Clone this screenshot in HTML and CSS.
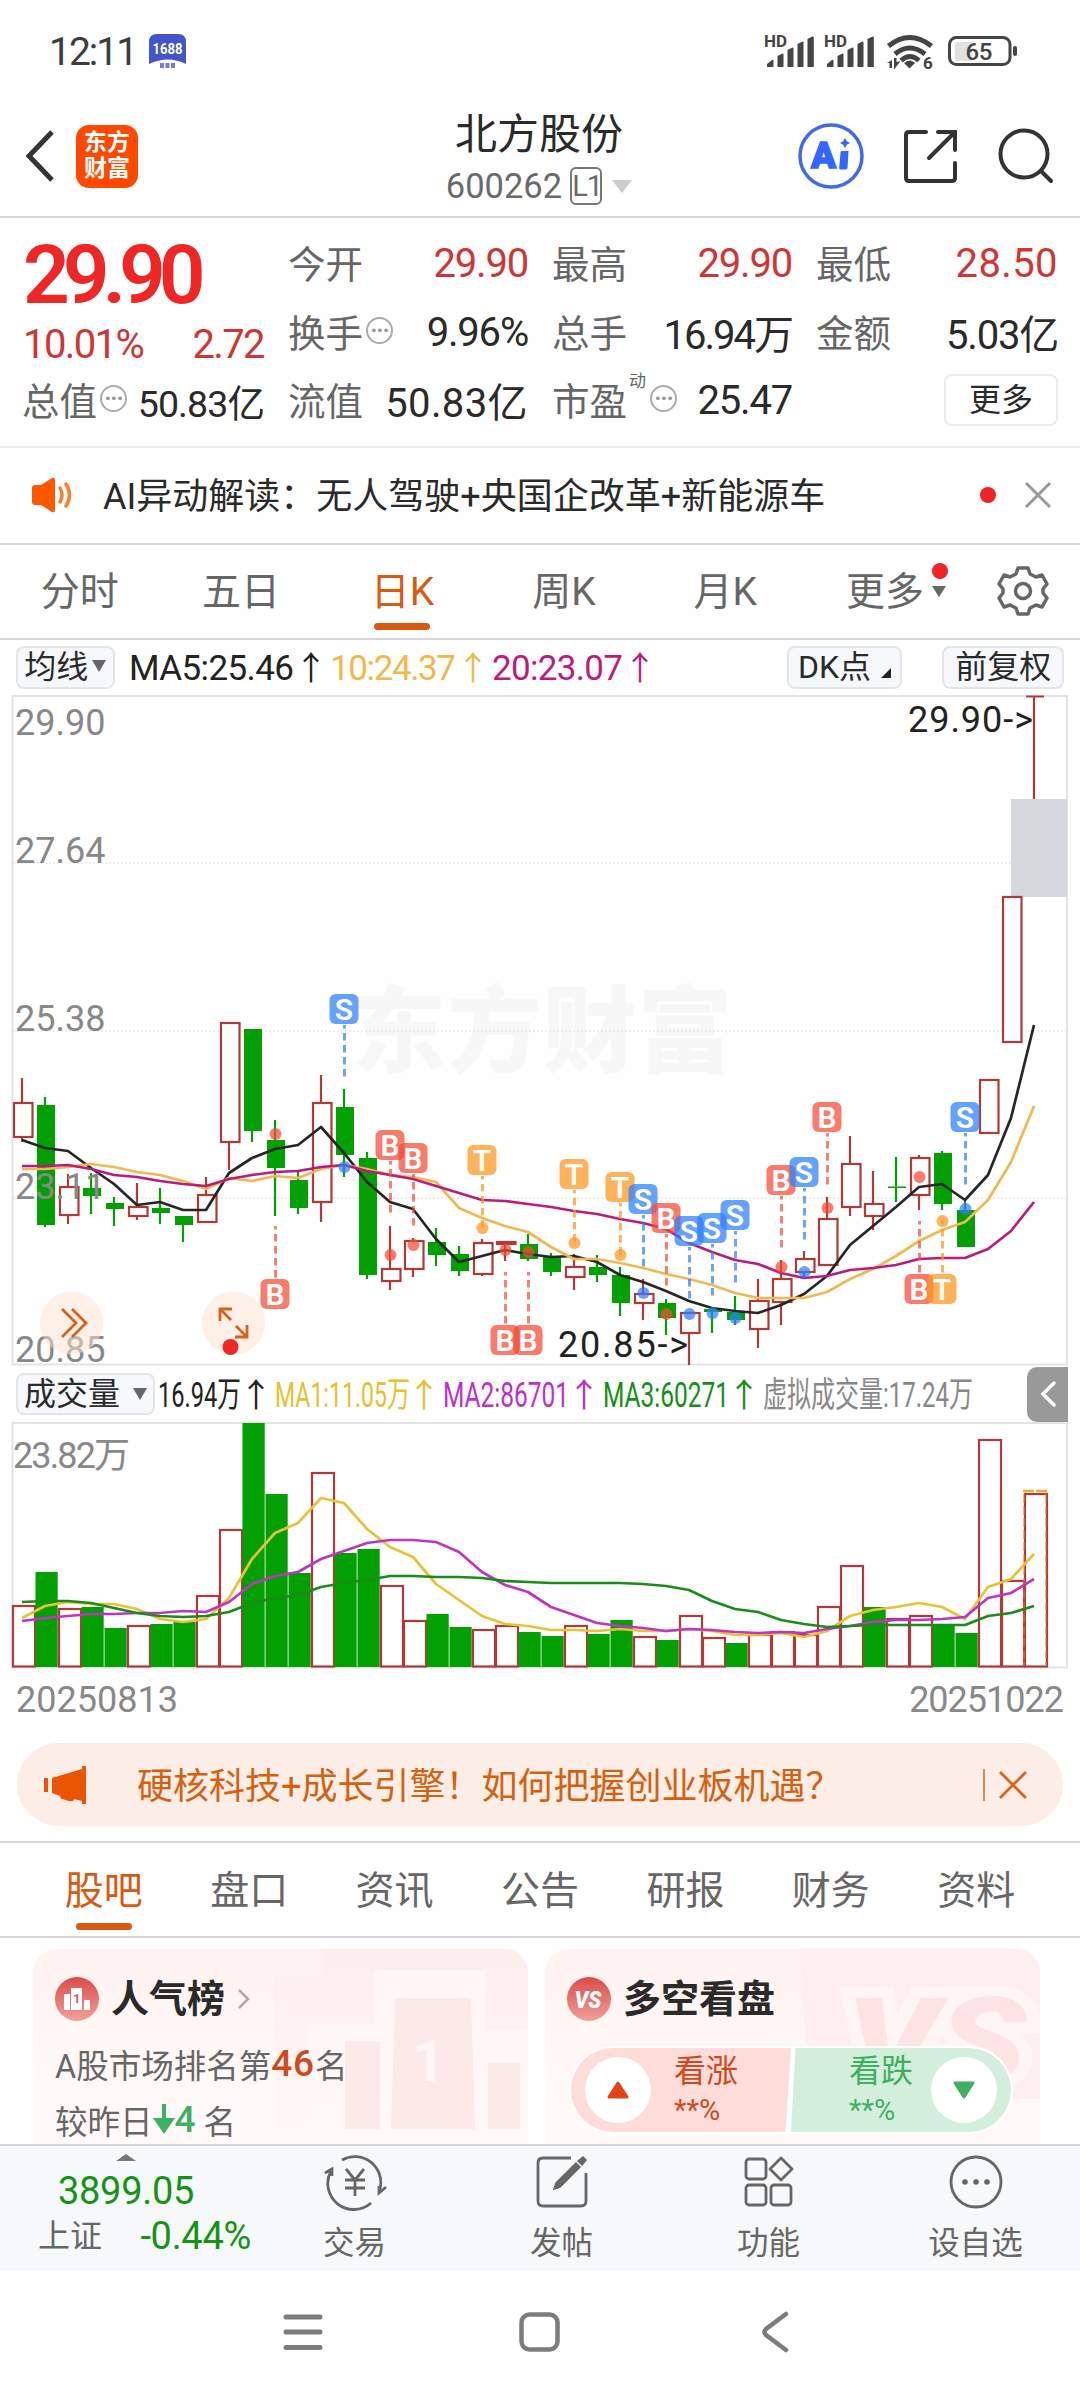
FILE: index.html
```html
<!DOCTYPE html>
<html lang="zh-CN">
<head>
    <meta charset="UTF-8">
    <meta name="viewport" content="width=1080">
    <title>北方股份 600262</title>
    <link rel="stylesheet" href="styles.css">
</head>
<body>
<div class="phone">
    <!-- 状态栏 -->
    <div class="status">
        <span class="clock">12:11</span>
        <svg class="app1688" width="37" height="36" viewBox="0 0 37 36">
            <path d="M8 0h21q8 0 8 8v22q-18-9-37 0V8q0-8 8-8z" fill="#4355c8"/>
            <text x="18.500" y="20" font-size="14.500" font-weight="700" fill="#fff" text-anchor="middle" textLength="30" lengthAdjust="spacingAndGlyphs">1688</text>
            <path d="M11 29h4v5h-4zM16.500 29h4v5h-4zM22 29h4v5h-4z" fill="#6f7dd6"/>
        </svg>
        <svg class="status-icons" width="260" height="40" viewBox="760 32 260 40">
            <g fill="#444">
                <text x="764" y="47" font-size="16" font-weight="700" textLength="23" lengthAdjust="spacingAndGlyphs">HD</text>
                <path id="sig" d="M767 67v-3l5-4q1.500-1 1.500 1v6zM777.500 67V56l5-2.500q1 0 1 1V67zM787.500 67V50l5-2.500q1 0 1 1V67zM797.500 67V44l5-2.500q1 0 1 1V67zM807.500 67V39l5-2.500q1.300 0 1.300 1V67z"/>
                <text x="824" y="47" font-size="16" font-weight="700" textLength="23" lengthAdjust="spacingAndGlyphs">HD</text>
                <use href="#sig" x="60"/>
                <path d="M904 63q6-5 11 0l-5.500 5.500z"/>
                <text x="923" y="69" font-size="17" font-weight="700">6</text>
                <path d="M887 63l5-3v8h-2.500v-5zM894 69v-11h2.500v4l4-1-6 8z"/>
                <rect x="1013" y="46" width="4" height="10" rx="2"/>
            </g>
            <g fill="none" stroke="#444" stroke-width="5">
                <path d="M888.500 46q21-17 43 0M895 54q14.500-12 30 0M901 60.500q9-8 18 0"/>
                <rect x="949.500" y="37.500" width="60.500" height="27" rx="7" stroke-width="3"/>
            </g>
            <path d="M957 42h15v19h-15q-2 0-2-3v-13q0-3 2-3z" fill="#e0e0e0"/>
            <text x="979" y="60" font-size="24" font-weight="500" fill="#444" text-anchor="middle" textLength="27">65</text>
        </svg>
    </div>

    <!-- 标题栏 -->
    <div class="header">
        <svg class="back" width="32" height="54" viewBox="0 0 32 54"><path d="M28 3 5 27l23 24" fill="none" stroke="#333" stroke-width="5"/></svg>
        <div class="logo">东方<br>财富</div>
        <div class="stock">
            <div class="stock-name">北方股份</div>
            <div class="stock-code">600262<span class="level">L1</span><i class="tri"></i></div>
        </div>
        <svg class="ai" width="68" height="68" viewBox="0 0 68 68">
            <circle cx="34" cy="34" r="31" fill="none" stroke="#4169e8" stroke-width="3.500"/>
            <text x="14" y="45.500" font-size="36" font-weight="900" fill="#3366ff" stroke="#3366ff" stroke-width="1.500" textLength="25" lengthAdjust="spacingAndGlyphs">A</text>
            <path d="M44.500 29h7l-1 17q0 1.500-2 1.500h-5q-1.500 0-1.300-1.500l1.300-15.500q0-1.500 1-1.500zM48 16l1.800 3.200L53 21l-3.200 1.800L48 26l-1.800-3.200L43 21l3.200-1.800z" fill="#3366ff"/>
        </svg>
        <svg class="share" width="56" height="56" viewBox="0 0 56 56"><path d="M23 4H6q-3 0-3 3v43q0 3 3 3h43q3 0 3-3V35M35 4h17v18M51 5 26 30" fill="none" stroke="#333" stroke-width="4" stroke-linecap="round"/></svg>
        <svg class="search" width="58" height="58" viewBox="0 0 58 58"><circle cx="27" cy="27" r="23.500" fill="none" stroke="#333" stroke-width="4"/><path d="m44 44 10 10" stroke="#333" stroke-width="4" stroke-linecap="round"/></svg>
    </div>

    <!-- 行情 -->
    <div class="quote">
        <div class="price">
            <div class="now">29.90</div>
            <div class="change"><span>10.01%</span><span>2.72</span></div>
        </div>
        <div class="cell"><label>今开</label><b class="red">29.90</b></div>
        <div class="cell"><label>最高</label><b class="red">29.90</b></div>
        <div class="cell"><label>最低</label><b class="red wide">28.50</b></div>
        <div class="cell"><label>换手</label><i class="dots">···</i><b>9.96%</b></div>
        <div class="cell"><label>总手</label><b class="tight">16.94万</b></div>
        <div class="cell"><label>金额</label><b>5.03亿</b></div>
        <div class="cell small"><label>总值</label><i class="dots">···</i><b>50.83亿</b></div>
        <div class="cell"><label>流值</label><b class="wide">50.83亿</b></div>
        <div class="cell"><label>市盈<sup>动</sup></label><i class="dots pe">···</i><b>25.47</b></div>
        <div class="cell"><button class="more">更多</button></div>
    </div>

    <!-- AI异动 -->
    <div class="notice">
        <svg width="42" height="36" viewBox="0 0 42 36"><path d="M0 11q0-3 3-3h6L20 1q3-1 3 2v30q0 3-3 2L9 28H3q-3 0-3-3z" fill="#ff5600"/><path d="M28 11q4 7 0 14M34 7q7 11 0 22" fill="none" stroke="#ff7a33" stroke-width="3.500" stroke-linecap="round"/></svg>
        <span class="notice-text">AI异动解读：无人驾驶+央国企改革+新能源车</span>
        <i class="red-dot"></i>
        <svg width="28" height="28" viewBox="0 0 28 28"><path d="m2 2 24 24M26 2 2 26" stroke="#999" stroke-width="3"/></svg>
    </div>

    <!-- 周期 -->
    <div class="period">
        <span>分时</span><span>五日</span><span class="on">日K</span><span>周K</span><span>月K</span>
        <span class="p-more">更多<i class="tri"></i><i class="red-dot"></i></span>
        <svg class="gear" width="52" height="52" viewBox="-26 -26 52 52"><path d="M-5-23H5L7-17 13-14 19-16 24-7 20-2V2L24 7 19 16 13 14 7 17 5 23H-5L-7 17-13 14-19 16-24 7-20 2V-2L-24-7-19-16-13-14-7-17Z" fill="none" stroke="#666" stroke-width="3.500" stroke-linejoin="round"/><circle r="7.500" fill="none" stroke="#666" stroke-width="3.500"/></svg>
    </div>

    <!-- 均线 -->
    <div class="ma">
        <button class="chip c1">均线<i class="tri"></i></button>
        <svg class="legend" width="530" height="50" viewBox="125 642 530 50">
            <g fill="#222"><text x="129" y="680" textLength="165">MA5:25.46</text><text class="up" x="311" y="680">↑</text></g>
            <g fill="#f0b84a"><text x="330" y="680" textLength="126">10:24.37</text><text class="up" x="473" y="680">↑</text></g>
            <g fill="#bf1a7d"><text x="492" y="680" textLength="131">20:23.07</text><text class="up" x="640" y="680">↑</text></g>
        </svg>
        <button class="chip c2">DK点<i class="corner"></i></button>
        <button class="chip c3">前复权</button>
    </div>

    <svg class="kline" id="kline" width="1080" height="671" viewBox="0 695 1080 671"></svg>

    <!-- 成交量 -->
    <div class="volume-head">
        <button class="chip c4">成交量<i class="tri"></i></button>
        <svg class="legend" width="830" height="50" viewBox="157 1370 830 50">
            <g fill="#222"><text x="158" y="1408" textLength="83" lengthAdjust="spacingAndGlyphs">16.94万</text><text class="up" x="256" y="1408">↑</text></g>
            <g fill="#e6c02f"><text x="275" y="1408" textLength="135" lengthAdjust="spacingAndGlyphs">MA1:11.05万</text><text class="up" x="424" y="1408">↑</text></g>
            <g fill="#c02fc9"><text x="443" y="1408" textLength="126" lengthAdjust="spacingAndGlyphs">MA2:86701</text><text class="up" x="584" y="1408">↑</text></g>
            <g fill="#178f17"><text x="603" y="1408" textLength="126" lengthAdjust="spacingAndGlyphs">MA3:60271</text><text class="up" x="744" y="1408">↑</text></g>
            <text fill="#888" x="763" y="1408" textLength="210" lengthAdjust="spacingAndGlyphs">虚拟成交量:17.24万</text>
        </svg>
        <div class="drawer"><svg width="18" height="28" viewBox="0 0 18 28"><path d="M15 3 4 14l11 11" fill="none" stroke="#fff" stroke-width="3.500" stroke-linecap="round"/></svg></div>
    </div>
    <svg class="volume" id="volume" width="1080" height="247" viewBox="0 1422 1080 247"></svg>
    <div class="dates"><span>20250813</span><span>20251022</span></div>

    <!-- 广告 -->
    <div class="banner">
        <svg width="42" height="38" viewBox="0 0 42 38"><path d="M0 12h4v14H0zM8 12 38 3V0h4v38h-4v-3l-8-2v1q-2 2-5 1l-7-2q-2-1-2-3L8 27z" fill="#ea5504"/></svg>
        <span class="banner-text">硬核科技+成长引擎！如何把握创业板机遇？</span>
        <i class="bar"></i>
        <svg width="30" height="30" viewBox="0 0 30 30"><path d="m2 2 26 26M28 2 2 28" stroke="#e0611c" stroke-width="2.800"/></svg>
    </div>

    <div class="tabs">
        <span class="on">股吧</span><span>盘口</span><span>资讯</span><span>公告</span><span>研报</span><span>财务</span><span>资料</span>
    </div>

    <div class="cards">
        <div class="card">
            <svg class="card-bg" width="495" height="196" viewBox="33 1949 495 196">
                <defs><linearGradient id="fade" x1="0" y1="0" x2="0" y2="1"><stop offset="0" stop-color="#fdeceb"/><stop offset="1" stop-color="#fff8f7"/></linearGradient></defs>
                <path d="M275 2145v-168h46v-28h207v196z" fill="url(#fade)" opacity=".7"/>
                <path d="M308 2129v-105h66v-54h112v60h42v99z" fill="#fff7f6" opacity=".8"/>
                <path d="M345 2041h35v88h-35zM395 1998h76l4 131h-84zM488 2063h32v66h-32z" fill="#fceae8"/>
                <text x="412" y="2081" font-size="58" font-weight="700" fill="#fff7f6">1</text>
            </svg>
            <h3>
                <svg width="44" height="44" viewBox="-22 -22 44 44"><circle r="22" fill="url(#redg)"/><path d="M-13-5h6v16h-6zM-6-11H5v22H-6zM7 1h6v10H7z" fill="#fff"/><text x="-4" y="4" font-size="13" font-weight="700" fill="#d9605c">1</text>
                    <defs><linearGradient id="redg" x1="0" y1="0" x2="0" y2="1"><stop offset="0" stop-color="#d94c48"/><stop offset="1" stop-color="#f0a09b"/></linearGradient></defs></svg>
                人气榜
                <svg class="go" width="14" height="22" viewBox="0 0 14 22"><path d="m2 2 9 9-9 9" fill="none" stroke="#aaa" stroke-width="2.500"/></svg>
            </h3>
            <p>A股市场排名第<b class="hot">46</b>名</p>
            <p>较昨日<svg class="down" width="22" height="30" viewBox="0 0 22 30"><path d="M9 0h4v14h9L11 30 0 14h9z" fill="#3fb062"/></svg><b class="cold">4</b> 名</p>
        </div>
        <div class="card">
            <svg class="card-bg" width="495" height="196" viewBox="545 1949 495 196">
                <path d="M799 1949h241v150H810z" fill="#feefee"/>
                <text x="846" y="2082" font-size="118" font-weight="900" font-style="italic" fill="#fde3e1" stroke="#fff5f4" stroke-width="22" paint-order="stroke" textLength="180" lengthAdjust="spacingAndGlyphs">VS</text>
            </svg>
            <h3>
                <svg width="44" height="44" viewBox="-22 -22 44 44"><circle r="22" fill="url(#redg)"/><text x="-1" y="9" font-size="24" font-weight="900" font-style="italic" fill="#fff" text-anchor="middle" textLength="27" lengthAdjust="spacingAndGlyphs">VS</text></svg>
                多空看盘
            </h3>
            <div class="vote">
                <div class="rise"><i><svg width="22" height="18" viewBox="0 0 22 18"><path d="M11 2 20 16H2z" fill="#e04414" stroke="#e04414" stroke-width="3" stroke-linejoin="round"/></svg></i><span>看涨<br><small>**%</small></span></div>
                <div class="fall"><span>看跌<br><small>**%</small></span><i><svg width="22" height="18" viewBox="0 0 22 18"><path d="M11 16 20 2H2z" fill="#3fb062" stroke="#3fb062" stroke-width="3" stroke-linejoin="round"/></svg></i></div>
            </div>
        </div>
    </div>

    <!-- 底部 -->
    <div class="footer">
        <div class="index">
            <i class="fold"></i>
            <div class="point">3899.05</div>
            <div class="pct"><span>上证</span><b>-0.44%</b></div>
        </div>
        <div class="item">
            <svg width="64" height="58" viewBox="-32 -29 64 58"><g fill="none" stroke="#666" stroke-width="2.800"><path d="M-13-22A26 26 0 0 1 25 7M16 21A26 26 0 0 1-24-11M-30-9l7-4v7M31 5l-7 6V4M-9-13l9 11 9-11M0-2v16M-10-2h20M-10 6h20"/></g></svg>
            交易
        </div>
        <div class="item">
            <svg width="64" height="58" viewBox="-32 -29 64 58"><path d="M9-24h-28q-5 0-5 5v38q0 5 5 5h38q5 0 5-5V-9" fill="none" stroke="#666" stroke-width="2.800"/><path d="M-8 7-6 1 14-19l4 4L-2 5zM16-21l5-4 3 3-4 5z" fill="#666" stroke="#666" stroke-width="1.500"/></svg>
            发帖
        </div>
        <div class="item">
            <svg width="64" height="58" viewBox="-32 -29 64 58"><g fill="none" stroke="#666" stroke-width="2.800" stroke-linejoin="round"><rect x="-23" y="-23" width="20" height="20" rx="3"/><rect x="-23" y="3" width="20" height="20" rx="3"/><rect x="2" y="3" width="20" height="20" rx="3"/><path d="m12-24 11 11-11 11L1-13z"/></g></svg>
            功能
        </div>
        <div class="item">
            <svg width="64" height="58" viewBox="-32 -29 64 58"><circle r="25" fill="none" stroke="#666" stroke-width="2.800"/><g fill="#666"><circle cx="-11" r="2.800"/><circle r="2.800"/><circle cx="11" r="2.800"/></g></svg>
            设自选
        </div>
    </div>
    <div class="nav">
        <svg width="1080" height="130" viewBox="0 2270 1080 130">
            <path d="M286 2317h34M286 2332h34M286 2347.500h34" stroke="#7c7c7c" stroke-width="5" stroke-linecap="round"/>
            <rect x="521.500" y="2314.500" width="36" height="35" rx="8" fill="none" stroke="#7c7c7c" stroke-width="4.500"/>
            <path d="m786 2314-20 15q-3 3 0 6l20 15" fill="none" stroke="#7c7c7c" stroke-width="4.500" stroke-linecap="round"/>
        </svg>
    </div>
</div>

<script>
const RED = '#b03a38';
const GREEN = '#02a002';
const X = i => 22 + i * 23;

// [最高, 实体上沿, 实体下沿, 最低, 涨(1)/跌(0)]
const candles = [
    [1078,1103,1137,1142,1],[1097,1105,1225,1227,0],[1174,1187,1215,1224,1],[1173,1188,1196,1214,0],[1197,1203,1209,1226,0],
    [1183,1207,1216,1220,1],[1188,1208,1213,1224,0],[1216,1216,1225,1242,0],[1177,1195,1222,1222,1],[1023,1023,1142,1170,1],
    [1029,1029,1131,1142,0],[1120,1140,1168,1216,0],[1172,1180,1208,1214,0],[1075,1103,1202,1222,1],[1089,1107,1155,1177,0],
    [1152,1158,1275,1279,0],[1226,1269,1281,1290,1],[1238,1241,1269,1277,1],[1228,1242,1255,1266,0],[1246,1254,1271,1276,0],
    [1239,1243,1274,1276,1],[1241,1242,1244,1261,1],[1234,1244,1259,1261,0],[1253,1257,1272,1276,0],[1254,1267,1277,1290,1],
    [1255,1267,1275,1282,0],[1267,1275,1303,1316,0],[1279,1294,1303,1320,1],[1299,1303,1318,1335,0],[1313,1313,1333,1365,1],
    [1308,1309,1312,1333,0],[1296,1312,1320,1325,0],[1279,1301,1329,1348,1],[1260,1279,1302,1325,1],[1251,1259,1272,1277,1],
    [1197,1219,1265,1265,1],[1136,1164,1207,1216,1],[1171,1204,1216,1230,1],[1157,1186.5,1188,1202,0],[1155,1158,1195,1210,1],
    [1151,1153,1204,1210,0],[1200,1210,1247,1247,0],[1080,1080,1133,1133,1],[897,897,1042,1042,1]
];
const ma5 = [1140,1148,1151,1168,1184,1205,1202,1210,1210,1173,1158,1149,1145,1127,1153,1182,1202,1209,1239,1262,1256,1250,1254,1257,1256,1262,1275,1282,1291,1301,1308,1311,1313,1305,1294,1276,1245,1226,1207,1187,1184,1200,1175,1118,1025];
const ma10 = [1169,1169,1167,1164,1167,1172,1175,1181,1189,1178,1181,1176,1178,1169,1165,1169,1175,1177,1182,1208,1218,1226,1232,1247,1259,1259,1263,1268,1274,1279,1285,1293,1298,1298,1298,1292,1279,1269,1256,1241,1230,1222,1200,1162,1106];
const ma20 = [1166,1166,1165,1169,1175,1177,1181,1184,1186,1179,1175,1172,1171,1167,1165,1171,1175,1179,1186,1193,1200,1201,1204,1207,1211,1214,1219,1223,1229,1243,1252,1260,1264,1273,1278,1276,1270,1268,1265,1259,1258,1258,1249,1231,1202];

// [类型, 第几根, 标签y, 圆点y, 标签在下方]
const marks = [
    ['S',14,1009,1167],['B',11,1294,1134,1],['B',16,1145,1255],['B',17,1158,1245],['T',20,1160,1228],['B',21,1340,1250,1],['B',22,1340,1252,1],
    ['T',24,1174,1243],['T',26,1187,1255],['S',27,1199,1293],['B',28,1218,1314],['S',29,1231,1314],['S',30,1228,1313],['S',31,1215,1318],
    ['B',33,1180,1267],['S',34,1172,1272],['B',35,1117,1208],['B',39,1289,1177,1],['T',40,1289,1221,1],['S',41,1117,1209]
];
const markColor = { B: '#f74a35', S: '#2b80ff', T: '#ff951c' };

function line(data, color) {
    return `<polyline points="${data.map((y, i) => X(i) + ',' + y).join(' ')}" fill="none" stroke="${color}" stroke-width="2.7" stroke-linejoin="round"/>`;
}

function drawKline() {
    let s = `<text class="watermark" x="352" y="1065" textLength="380">东方财富</text>`;
    [863, 1031, 1198].forEach(y => s += `<path d="M13 ${y}H1067" stroke="#ddd" stroke-dasharray="2 2"/>`);
    s += `<path d="M12.500 696H1067V1364.500H12.500Z" fill="none" stroke="#e3e3e3" stroke-width="2"/>`;
    s += `<rect x="1011" y="799" width="56" height="98" fill="#d4d7dc"/>`;
    candles.forEach(([hi, top, bot, lo, up], i) => {
        const x = X(i), c = up ? RED : GREEN;
        s += `<path d="M${x} ${hi}V${top}M${x} ${bot}V${lo}" stroke="${c}" stroke-width="2.2"/>`;
        s += up
            ? `<rect x="${x - 8}" y="${top}" width="18.500" height="${bot - top}" fill="#fff" stroke="${c}" stroke-width="2.2"/>`
            : `<rect x="${x - 8}" y="${top}" width="18" height="${bot - top}" fill="${c}"/>`;
    });
    s += `<path d="M1034 696V799M1026 696.500H1044" stroke="${RED}" stroke-width="2.200"/>`;
    s += line(ma5, '#262626') + line(ma10, '#efb950') + line(ma20, '#bb1c7c');
    marks.forEach(([t, i, y, dot, below]) => {
        const x = X(i), c = markColor[t];
        const from = below ? y - 68 : y + 16;
        s += `<path d="M${x + .5} ${from}v53" stroke="${c}" stroke-width="3" stroke-dasharray="7.500 4.500" stroke-dashoffset="4" opacity=".7"/>`;
        s += `<circle cx="${x + .5}" cy="${dot}" r="6" fill="${c}" opacity=".72"/>`;
        s += `<rect x="${x - 14.5}" y="${y - 15}" width="29" height="30" rx="6" fill="${c}" opacity=".73"/>`;
        s += `<text class="mark" x="${x}" y="${y + 11}">${t}</text>`;
    });
    [['29.90', 735], ['27.64', 863], ['25.38', 1031], ['23.11', 1199], ['20.85', 1362]].forEach(([t, y]) => {
        s += `<text class="axis" x="15" y="${y}">${t}</text>`;
    });
    s += `<text class="tip" x="908" y="732" textLength="125">29.90-&gt;</text><text class="tip" x="558" y="1357" textLength="130">20.85-&gt;</text>`;
    // 悬浮按钮
    s += `<circle cx="71.500" cy="1323" r="31.500" fill="#fde0d0" opacity=".5"/><circle cx="233.500" cy="1323" r="31.500" fill="#fde0d0" opacity=".5"/>`;
    s += `<path d="m62 1309 14 14-14 14M72 1309l14 14-14 14M231 1320l-11-11M232 1309h-12v12M236 1326l11 11M247 1325v12h-12" fill="none" stroke="#d9601c" stroke-width="2.800"/>`;
    s += `<circle cx="230.500" cy="1347" r="8" fill="#ee2722"/>`;
    document.getElementById('kline').innerHTML = s;
}

const vols = [1606,1572,1609,1607,1628,1626,1624,1622,1596,1530,1423,1494,1573,1473,1553,1549,1586,1621,1614,1627,1630,1626,1632,1636,1626,1634,1620,1637,1640,1616,1638,1643,1635,1632,1635,1607,1566,1607,1619,1616,1624,1633,1440,1581,1494];
const volRed = [0,2,5,8,9,13,16,17,20,21,24,27,29,30,32,33,34,35,36,38,39,42,43,44];
const vma1 = [1618,1606,1602,1604,1604,1609,1619,1622,1619,1598,1559,1533,1523,1498,1503,1529,1547,1557,1584,1600,1616,1624,1626,1630,1630,1631,1629,1631,1631,1629,1631,1635,1635,1633,1637,1631,1616,1610,1607,1603,1607,1619,1587,1579,1554];
const vma2 = [1621,1618,1616,1614,1614,1613,1613,1611,1612,1602,1584,1576,1572,1559,1551,1543,1540,1540,1542,1552,1572,1585,1592,1607,1615,1623,1626,1628,1631,1629,1630,1632,1633,1632,1633,1629,1626,1622,1620,1620,1619,1617,1598,1593,1579];
const vma3 = [1602,1601,1601,1603,1608,1613,1616,1617,1616,1612,1603,1598,1595,1587,1583,1580,1576,1576,1577,1577,1578,1581,1582,1583,1583,1583,1583,1584,1586,1590,1601,1609,1612,1620,1624,1627,1626,1625,1625,1625,1625,1625,1616,1613,1606];

function drawVolume() {
    let s = `<path d="M12.500 1423H1067V1667.500H12.500Z" fill="none" stroke="#e3e3e3" stroke-width="2"/>`;
    vols.forEach((y, i) => {
        const x = X(i) - 9.5;
        s += volRed.includes(i)
            ? `<rect x="${x + .5}" y="${y}" width="22" height="${1666.5 - y}" fill="#fff" stroke="${RED}" stroke-width="2.200"/>`
            : `<rect x="${x}" y="${y}" width="22.200" height="${1667 - y}" fill="${GREEN}"/>`;
    });
    s += `<path d="M1023 1491h24" stroke="#e6b02f" stroke-width="2.500" stroke-dasharray="11 2"/>`;
    s += `<path d="M1024 1494v172M1046 1494v172" stroke="#e6802f" stroke-width="1" stroke-dasharray="9 3"/>`;
    s += line(vma1, '#e8c235') + line(vma2, '#bd35c2') + line(vma3, '#1a8c1a');
    s += `<text class="axis" x="13" y="1468" textLength="117">23.82万</text>`;
    document.getElementById('volume').innerHTML = s;
}

drawKline();
drawVolume();
</script>
</body>
</html>
```
FILE: styles.css
```css
* {
    box-sizing: border-box;
}
body {
    margin: 0;
    background: #fefefe;
    font-family: Roboto, "Noto Sans CJK SC", sans-serif;
    color: #2a2a2a;
}
svg {
    display: block;
    flex: none;
}
i {
    font-style: normal;
}
button {
    font-family: inherit;
    color: inherit;
    padding: 0;
}
.phone {
    width: 1080px;
    height: 2400px;
    display: flex;
    flex-direction: column;
    overflow: hidden;
}
.phone > * {
    flex: none;
}
.tri {
    display: inline-block;
    border: 7px solid transparent;
    border-top: 12px solid #666;
    border-bottom: 0;
}
.red-dot {
    width: 16px;
    height: 16px;
    border-radius: 50%;
    background: #f02424;
}

/* 状态栏 */
.status {
    height: 100px;
    display: flex;
    align-items: center;
    padding: 3px 60px 0 49px;
}
.clock {
    font-size: 39px;
    letter-spacing: -2px;
    color: #3c3c3c;
    width: 100px;
}
.status-icons {
    margin-left: auto;
}

/* 标题栏 */
.header {
    height: 118px;
    border-bottom: 2px solid #d6d6d6;
    display: flex;
    align-items: center;
    padding: 0 25px 4px 24px;
}
.logo {
    width: 63px;
    height: 63px;
    margin-left: 20px;
    border-radius: 13px;
    background: #ff4800;
    color: #fff;
    font-size: 23px;
    line-height: 26px;
    font-weight: 700;
    text-align: center;
    padding-top: 5px;
}
.stock {
    width: 240px;
    margin: 4px 0 0 283px;
    text-align: center;
}
.stock-name {
    font-size: 42px;
    line-height: 54px;
}
.stock-code {
    display: flex;
    align-items: center;
    justify-content: center;
    height: 44px;
    margin-top: 2px;
    font-size: 34.500px;
    color: #6a6a6a;
}
.level {
    width: 32px;
    height: 38px;
    margin: 0 10px 0 8px;
    border: 2px solid #777;
    border-radius: 6px;
    font-size: 29px;
    line-height: 34px;
    letter-spacing: -1px;
}
.stock-code .tri {
    border-width: 13px 10px 0;
    border-top-color: #ccc;
}
.ai {
    margin-left: 140px;
}
.share {
    margin-left: 38px;
}
.search {
    margin-left: 38px;
}

/* 行情 */
.quote {
    height: 230px;
    padding: 10px 22px 0 23px;
    border-bottom: 2px solid #ececec;
    display: grid;
    grid-template-columns: 241px 239px 239px 241px;
    grid-template-rows: 70px 68px 68px;
    column-gap: 25px;
}
.price {
    grid-row: span 2;
}
.now {
    font-size: 82px;
    font-weight: 600;
    line-height: 94px;
    letter-spacing: -7px;
    color: #ef2626;
}
.change {
    display: flex;
    justify-content: space-between;
    font-size: 40px;
    line-height: 46px;
    letter-spacing: -1.6px;
    color: #d03535;
}
.cell {
    display: flex;
    align-items: center;
    font-size: 40px;
}
.cell label {
    margin: 0 1px 4px -1px;
    font-size: 37.500px;
    color: #666;
    position: relative;
}
.cell b {
    margin-left: auto;
    font-weight: 400;
    letter-spacing: -1.2px;
    white-space: nowrap;
}
.cell .wide {
    letter-spacing: .4px;
}
.cell .tight {
    letter-spacing: -2px;
}
.cell.small b {
    font-size: 37.500px;
    letter-spacing: -.9px;
}
.cell .red {
    color: #d03535;
}
.cell sup {
    position: absolute;
    left: 77px;
    top: 0;
    font-size: 17px;
    line-height: 20px;
}
.dots {
    width: 27px;
    height: 27px;
    margin: 0 0 4px 2px;
    border: 2px solid #aaa;
    border-radius: 50%;
    color: #999;
    font-size: 24px;
    font-weight: 700;
    line-height: 22px;
    text-align: center;
    letter-spacing: -1px;
}
.dots.pe {
    margin-left: 22px;
}
.more {
    width: 114px;
    height: 52px;
    margin-left: auto;
    border: 2px solid #e9ebec;
    border-radius: 8px;
    background: #fff;
    font-size: 32px;
    line-height: 44px;
}

/* AI异动 */
.notice {
    height: 97px;
    border-bottom: 2px solid #d6d6d6;
    display: flex;
    align-items: center;
    padding: 0 28px 2px 32px;
}
.notice-text {
    margin-left: 29px;
    margin-right: auto;
    padding-bottom: 3px;
    font-size: 36px;
}
.notice .red-dot {
    margin-right: 28px;
}

/* 周期 */
.period {
    height: 95px;
    border-bottom: 2px solid #d6d6d6;
    display: flex;
    align-items: center;
    padding-bottom: 2px;
    font-size: 39px;
    color: #666;
}
.period span {
    width: 161.400px;
    height: 93px;
    padding-right: 2px;
    line-height: 96px;
    text-align: center;
    position: relative;
}
.period .on,
.tabs .on {
    color: #d85a10;
}
.period .on::after,
.tabs .on::after {
    content: "";
    position: absolute;
    left: 50%;
    bottom: 7px;
    width: 56px;
    height: 7px;
    margin-left: -29px;
    border-radius: 4px;
    background: #d85a10;
}
.period .p-more {
    width: 178px;
    padding-left: 2px;
}
.p-more .tri {
    margin-left: 8px;
    vertical-align: 8px;
    border-width: 11px 7px 0;
}
.p-more .red-dot {
    position: absolute;
    left: 125px;
    top: 19px;
}
.gear {
    margin-left: 12px;
}

/* 图表标题 */
.ma,
.volume-head {
    display: flex;
    align-items: center;
    padding: 0 16px;
}
.ma {
    height: 55px;
    padding-bottom: 1px;
}
.chip {
    height: 43px;
    border: 2px solid #e3e6e9;
    border-radius: 8px;
    background: #f6f8fb;
    font-size: 32px;
    line-height: 38px;
    white-space: nowrap;
}
.c1 {
    width: 99px;
}
.c1 .tri {
    margin-left: 4px;
    vertical-align: 6px;
}
.c2 {
    width: 116px;
    margin-left: 132px;
}
.c3 {
    width: 122px;
    margin-left: 40px;
}
.c4 {
    width: 139px;
    height: 42px;
}
.c4 .tri {
    margin-left: 13px;
    vertical-align: 5px;
}
.corner {
    display: inline-block;
    margin-left: 10px;
    border-left: 10px solid transparent;
    border-bottom: 10px solid #222;
}
.legend {
    font-size: 35px;
    margin-left: 10px;
    overflow: visible;
}
.legend .up {
    font-family: "Noto Sans CJK SC", sans-serif;
    font-size: 33px;
    text-anchor: middle;
}
.volume-head {
    height: 56px;
    padding-right: 12px;
}
.volume-head .legend {
    margin-left: 2px;
}
.drawer {
    width: 41px;
    height: 55px;
    margin-left: auto;
    border-radius: 10px 0 0 10px;
    background: #999;
    display: flex;
    align-items: center;
    justify-content: center;
}
.axis {
    font-size: 36px;
    fill: #888;
}
.tip {
    font-size: 36px;
    fill: #222;
}
.mark {
    font-size: 30px;
    font-weight: 600;
    fill: #fff;
    text-anchor: middle;
}
.watermark {
    font-size: 94px;
    font-weight: 900;
    fill: #f7f7f7;
}
.dates {
    height: 74px;
    padding: 10px 17px 0 16px;
    display: flex;
    justify-content: space-between;
    font-size: 36px;
    line-height: 42px;
    color: #888;
}
.dates span:last-child {
    letter-spacing: -1px;
}

/* 广告 */
.banner {
    height: 83px;
    margin: 0 17px 15px;
    border-radius: 42px;
    background: #fceee6;
    display: flex;
    align-items: center;
    padding: 0 35px 0 27px;
}
.banner-text {
    margin-left: 51px;
    margin-right: auto;
    padding-bottom: 3px;
    font-size: 36px;
    color: #d5600f;
}
.bar {
    width: 2px;
    height: 32px;
    margin-right: 13px;
    background: #e0864f;
}

.tabs {
    height: 97px;
    border-top: 2px solid #d6d6d6;
    border-bottom: 2px solid #d6d6d6;
    display: flex;
    padding: 0 31px;
    font-size: 39px;
    line-height: 96px;
    color: #666;
}
.tabs span {
    flex: 1;
    text-align: center;
    position: relative;
}
.tabs .on::after {
    margin-left: -28px;
    bottom: 6px;
}

/* 卡片 */
.cards {
    height: 206px;
    display: flex;
    gap: 17px;
    padding: 11px 33px 0;
    overflow: hidden;
}
.card {
    width: 495px;
    height: 260px;
    padding: 25px 22px;
    border-radius: 24px;
    background: linear-gradient(#fff2f0, #fffaf9 60%);
    position: relative;
    overflow: hidden;
}
.card-bg {
    position: absolute;
    left: 0;
    top: 0;
}
.card h3 {
    display: flex;
    align-items: center;
    gap: 12px;
    height: 50px;
    margin: 0 0 11px;
    font-size: 38px;
    line-height: 46px;
    font-weight: 700;
    position: relative;
}
.card p {
    display: flex;
    align-items: center;
    height: 56px;
    margin: 0;
    font-size: 32.500px;
    color: #666;
    white-space: pre;
    position: relative;
}
.card p b {
    font-size: 37px;
    font-weight: 500;
}
.card .hot {
    color: #d0491c;
    letter-spacing: .8px;
}
.card .cold {
    color: #3fb062;
}
.vote {
    width: 444px;
    height: 88px;
    margin: 22px 0 0 2px;
    border: 2px solid #fff;
    border-radius: 44px;
    background: #fff;
    display: flex;
    overflow: hidden;
    position: relative;
    font-size: 32px;
    line-height: 38px;
}
.vote > div {
    flex: 1;
    display: flex;
    align-items: center;
}
.vote i {
    width: 66px;
    height: 66px;
    border-radius: 50%;
    background: #fff;
    display: flex;
    align-items: center;
    justify-content: center;
}
.vote small {
    font-size: 29px;
}
.rise {
    background: #fddcd9;
    color: #d0491c;
    padding-left: 14px;
    gap: 23px;
    clip-path: polygon(0 0, 100% 0, 97.500% 100%, 0 100%);
}
.fall {
    background: #d3eedb;
    color: #3fb062;
    padding-right: 14px;
    justify-content: flex-end;
    gap: 18px;
    clip-path: polygon(2% 0, 100% 0, 100% 100%, 0 100%);
}

/* 底部 */
.footer {
    height: 126px;
    border-top: 2px solid #d5d7db;
    background: #f7f8fa;
    display: flex;
}
.index {
    width: 251px;
    color: #159315;
}
.fold {
    display: block;
    width: 0;
    margin: 8px 0 0 116px;
    border: 10px solid transparent;
    border-top: 0;
    border-bottom: 7px solid #777;
}
.point {
    margin: 8px 0 0 58px;
    font-size: 38px;
    line-height: 44px;
    letter-spacing: -.3px;
}
.pct {
    display: flex;
    justify-content: space-between;
    padding-left: 38px;
    font-size: 32px;
    line-height: 46px;
}
.pct span {
    color: #666;
}
.pct b {
    font-size: 38px;
    font-weight: 400;
    letter-spacing: -.3px;
}
.item {
    width: 207px;
    display: flex;
    flex-direction: column;
    align-items: center;
    padding-top: 7px;
    font-size: 31.500px;
    line-height: 65px;
    color: #666;
}
.nav {
    height: 130px;
    background: #fff;
}
```
